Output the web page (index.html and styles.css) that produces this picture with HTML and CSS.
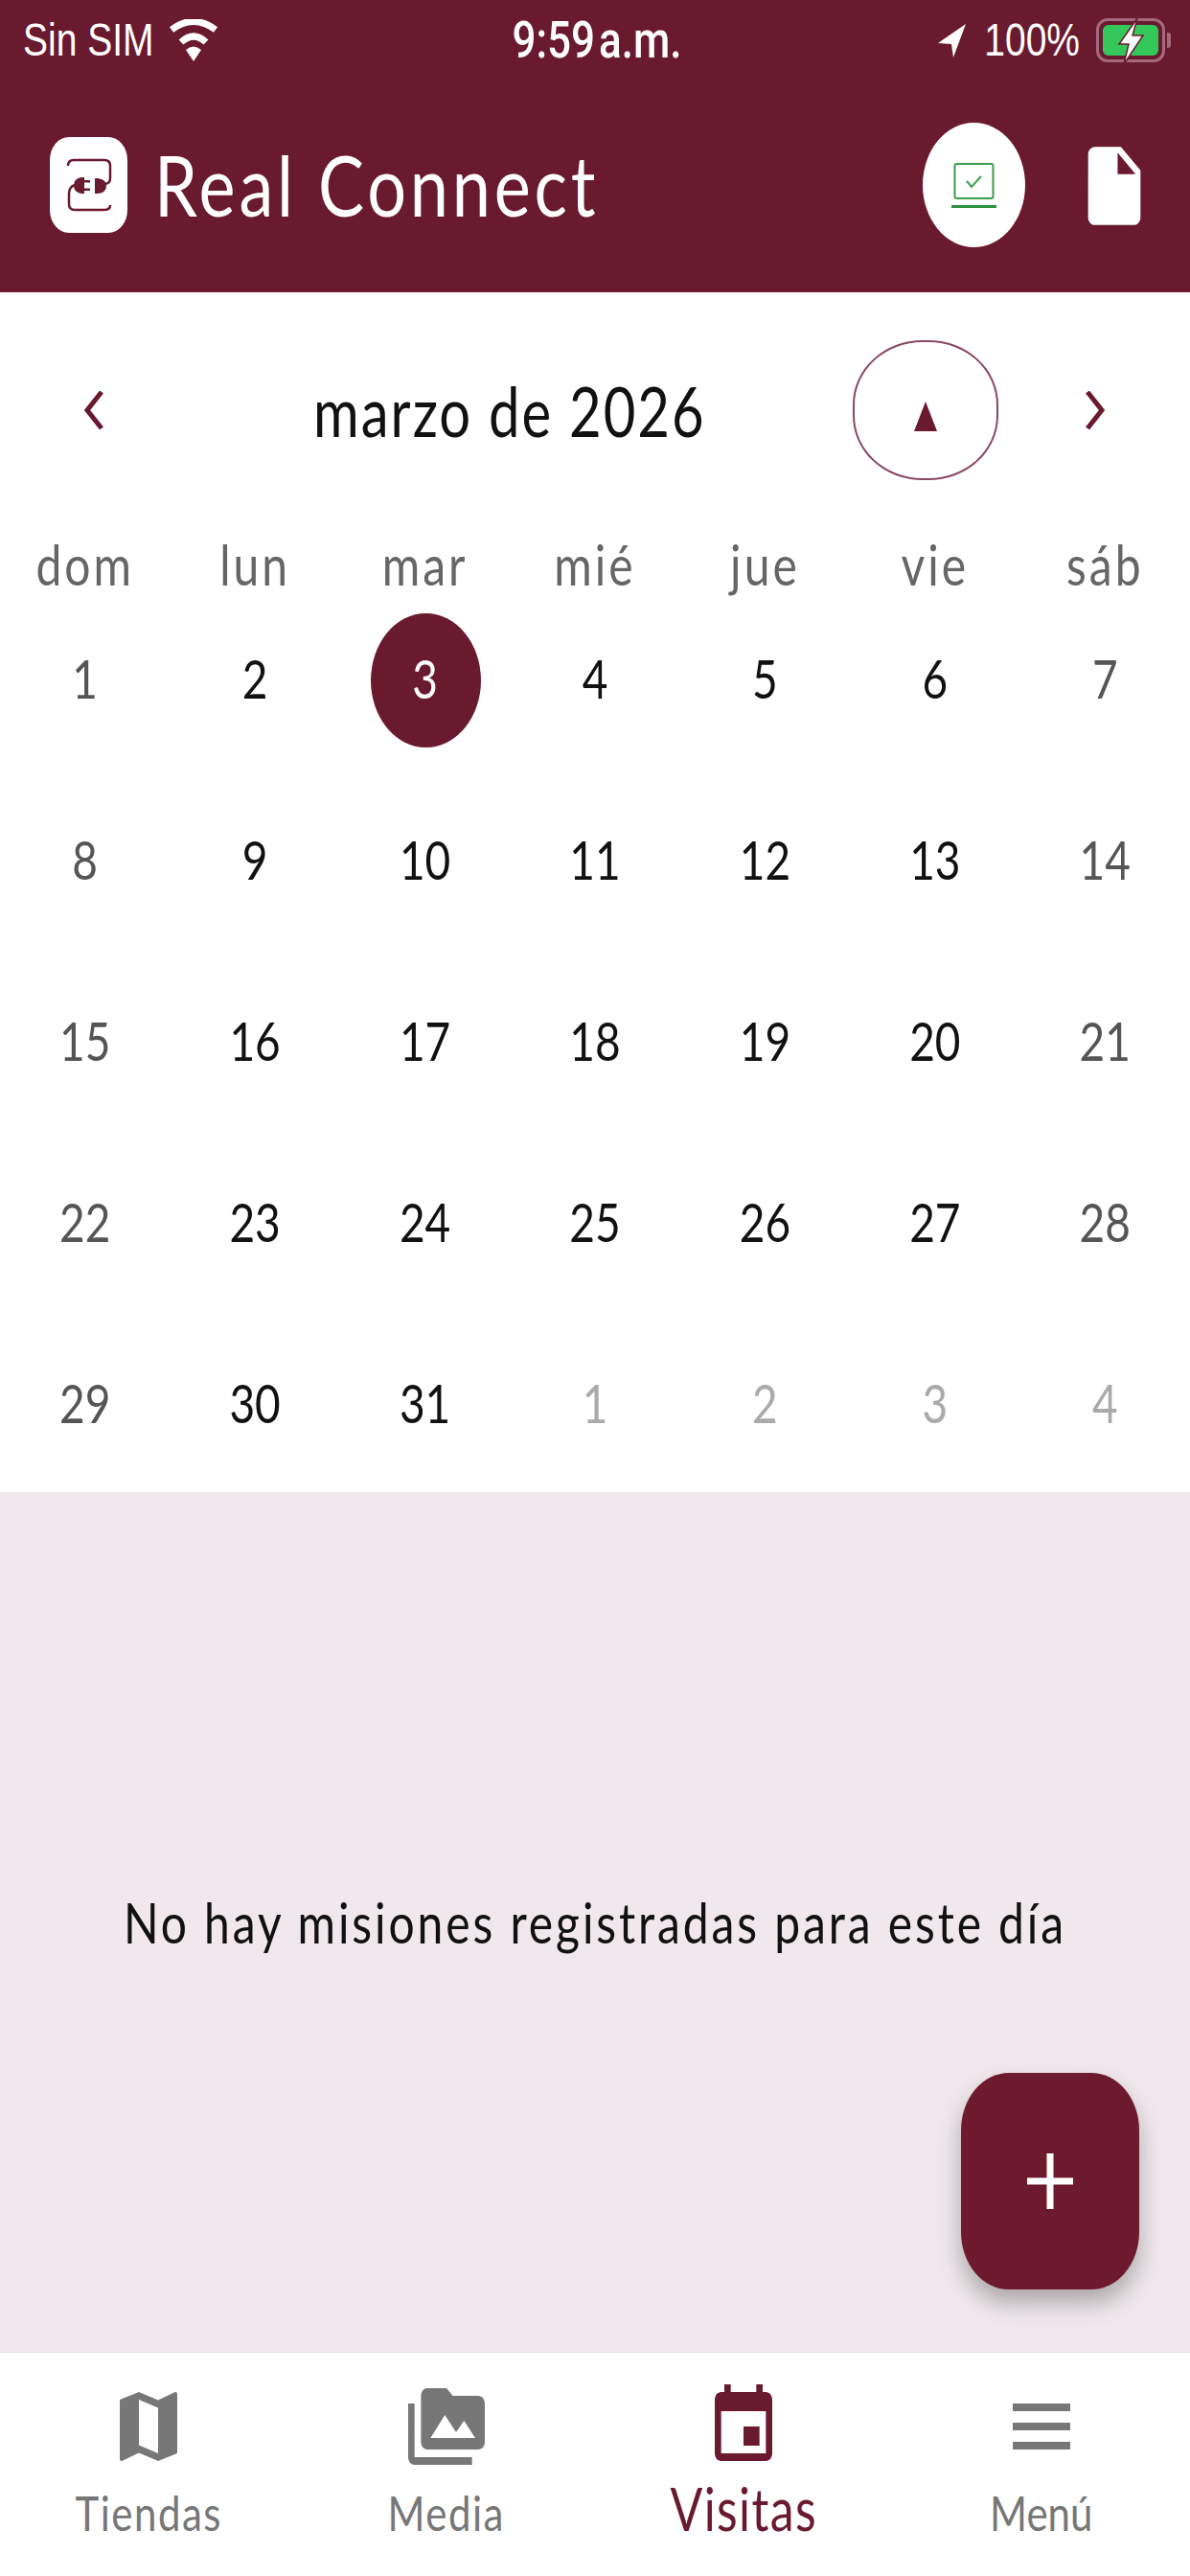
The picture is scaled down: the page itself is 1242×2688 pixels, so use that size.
FILE: index.html
```html
<!DOCTYPE html>
<html lang="es">

<head>
    <meta charset="UTF-8">
    <meta name="viewport" content="width=device-width, initial-scale=1.0">
    <title>Real Connect</title>
    <link rel="stylesheet" href="styles.css">
</head>

<body>
    <div class="status-bar">
        <div class="status-left">
            <span class="tall">Sin SIM</span>
            <svg class="wifi" viewBox="0 0 52 44" preserveAspectRatio="none">
                <path d="M26 44 L18 32 Q26 25 34 32 Z" fill="#fff" />
                <path d="M13 24 Q26 12 39 24" fill="none" stroke="#fff" stroke-width="7" />
                <path d="M3 11 Q26 -6 49 11" fill="none" stroke="#fff" stroke-width="7" />
            </svg>
        </div>
        <div class="status-time"><span class="tall">9:59<span class="thin-gap"></span>a.m.</span></div>
        <div class="status-right">
            <svg class="location" viewBox="0 0 29 35" preserveAspectRatio="none">
                <path d="M29 0 L0 20 L14 21 L16 35 Z" fill="#fff" />
            </svg>
            <span class="tall">100%</span>
            <div class="battery">
                <div class="battery-fill"></div>
                <svg class="bolt" viewBox="0 0 30 48" preserveAspectRatio="none">
                    <path d="M22 0 L3 27 L13 27 L8 48 L28 18 L17 18 Z" fill="#fff" stroke="#6a1a2f" stroke-width="1.5" />
                </svg>
            </div>
            <div class="battery-nub"></div>
        </div>
    </div>

    <header class="app-bar">
        <div class="logo">
            <svg viewBox="0 0 81 100" preserveAspectRatio="none">
                <path d="M19 30 Q19 24 25 24 H57 Q63 24 63 30 V43 Q63 48 58 49" fill="none" stroke="#6a1a2f" stroke-width="2.5" />
                <path d="M26 50 Q20 52 20 59 V70 Q20 76 26 76 H57 Q63 76 63 71" fill="none" stroke="#6a1a2f" stroke-width="2.5" />
                <path d="M36 42 V59 H33 Q25 58 25 50.5 Q25 43 33 42 Z" fill="#6a1a2f" />
                <path d="M36 45 H42 V47.5 H36 Z M36 53.5 H42 V56 H36 Z" fill="#6a1a2f" />
                <path d="M47 43 H50 Q59 44 59 51 Q59 58 50 59 H47 Z" fill="#6a1a2f" />
            </svg>
        </div>
        <h1 class="app-title"><span class="tall">Real Connect</span></h1>
        <div class="sync-btn">
            <svg viewBox="0 0 47 47" preserveAspectRatio="none">
                <rect x="3.5" y="1" width="40" height="36" rx="2" fill="none" stroke="#3a9e4d" stroke-width="2" />
                <path d="M16 19 L21 25 L31 14" fill="none" stroke="#3a9e4d" stroke-width="2" />
                <rect x="0" y="44" width="47" height="3" fill="#2e9142" />
            </svg>
        </div>
        <svg class="doc-icon" viewBox="0 0 24 24" preserveAspectRatio="none">
            <path d="M6 2c-1.1 0-1.99.9-1.99 2L4 20c0 1.1.89 2 1.99 2H18c1.1 0 2-.9 2-2V8l-6-6H6zm7 7V3.5L18.5 9H13z" fill="#fff" />
        </svg>
    </header>

    <section class="calendar">
        <div class="month-row">
            <svg class="chevron" viewBox="0 0 20 40" preserveAspectRatio="none">
                <path d="M18 1 L3 20 L18 39" fill="none" stroke="#6a1a2f" stroke-width="5" />
            </svg>
            <div class="month-name"><span class="tall">marzo de 2026</span></div>
            <div class="month-toggle">
                <svg viewBox="0 0 24 31" preserveAspectRatio="none">
                    <path d="M12 0 L24 31 H0 Z" fill="#6a1a2f" />
                </svg>
            </div>
            <svg class="chevron chevron-next" viewBox="0 0 20 40" preserveAspectRatio="none">
                <path d="M2 1 L17 20 L2 39" fill="none" stroke="#6a1a2f" stroke-width="5" />
            </svg>
        </div>

        <div class="week-head">
            <span class="tall">dom</span>
            <span class="tall">lun</span>
            <span class="tall">mar</span>
            <span class="tall">mié</span>
            <span class="tall">jue</span>
            <span class="tall">vie</span>
            <span class="tall">sáb</span>
        </div>

        <div class="days">
            <div class="day weekend"><span class="tall">1</span></div>
            <div class="day"><span class="tall">2</span></div>
            <div class="day today"><span class="tall">3</span></div>
            <div class="day"><span class="tall">4</span></div>
            <div class="day"><span class="tall">5</span></div>
            <div class="day"><span class="tall">6</span></div>
            <div class="day weekend"><span class="tall">7</span></div>

            <div class="day weekend"><span class="tall">8</span></div>
            <div class="day"><span class="tall">9</span></div>
            <div class="day"><span class="tall">10</span></div>
            <div class="day"><span class="tall">11</span></div>
            <div class="day"><span class="tall">12</span></div>
            <div class="day"><span class="tall">13</span></div>
            <div class="day weekend"><span class="tall">14</span></div>

            <div class="day weekend"><span class="tall">15</span></div>
            <div class="day"><span class="tall">16</span></div>
            <div class="day"><span class="tall">17</span></div>
            <div class="day"><span class="tall">18</span></div>
            <div class="day"><span class="tall">19</span></div>
            <div class="day"><span class="tall">20</span></div>
            <div class="day weekend"><span class="tall">21</span></div>

            <div class="day weekend"><span class="tall">22</span></div>
            <div class="day"><span class="tall">23</span></div>
            <div class="day"><span class="tall">24</span></div>
            <div class="day"><span class="tall">25</span></div>
            <div class="day"><span class="tall">26</span></div>
            <div class="day"><span class="tall">27</span></div>
            <div class="day weekend"><span class="tall">28</span></div>

            <div class="day weekend"><span class="tall">29</span></div>
            <div class="day"><span class="tall">30</span></div>
            <div class="day"><span class="tall">31</span></div>
            <div class="day other"><span class="tall">1</span></div>
            <div class="day other"><span class="tall">2</span></div>
            <div class="day other"><span class="tall">3</span></div>
            <div class="day other"><span class="tall">4</span></div>
        </div>
    </section>

    <main class="missions">
        <p class="empty-text"><span class="tall">No hay misiones registradas para este día</span></p>
        <button class="fab">
            <svg viewBox="0 0 48 58" preserveAspectRatio="none">
                <path d="M20.5 0 H27.5 V25.5 H48 V32.5 H27.5 V58 H20.5 V32.5 H0 V25.5 H20.5 Z" fill="#fff" />
            </svg>
        </button>
    </main>

    <nav class="tab-bar">
        <div class="tab">
            <svg class="tab-icon" viewBox="0 0 24 24" preserveAspectRatio="none">
                <path d="M20.5 3l-.16.03L15 5.1 9 3 3.36 4.9c-.21.07-.36.25-.36.48V20.5c0 .28.22.5.5.5l.16-.03L9 18.9l6 2.1 5.64-1.9c.21-.07.36-.25.36-.48V3.5c0-.28-.22-.5-.5-.5zM15 19l-6-2.11V5l6 2.11V19z" />
            </svg>
            <span class="tab-label tall">Tiendas</span>
        </div>
        <div class="tab">
            <svg class="tab-icon" viewBox="0 0 24 24" preserveAspectRatio="none">
                <path d="M2 6H0v5h.01L0 20c0 1.1.9 2 2 2h18v-2H2V6zm20-2h-8l-2-2H6c-1.1 0-1.99.9-1.99 2L4 16c0 1.1.9 2 2 2h16c1.1 0 2-.9 2-2V6c0-1.1-.9-2-2-2zM7 15l4.5-6 3.5 4.51 2.5-3.01L21 15H7z" />
            </svg>
            <span class="tab-label tall">Media</span>
        </div>
        <div class="tab tab-active">
            <svg class="tab-icon" viewBox="0 0 24 24" preserveAspectRatio="none">
                <path d="M17 12h-5v5h5v-5zM16 1v2H8V1H6v2H5c-1.11 0-1.99.9-1.99 2L3 19c0 1.1.89 2 2 2h14c1.1 0 2-.9 2-2V5c0-1.1-.9-2-2-2h-1V1h-2zm3 18H5V8h14v11z" />
            </svg>
            <span class="tab-label tall">Visitas</span>
        </div>
        <div class="tab">
            <svg class="tab-icon" viewBox="0 0 24 24" preserveAspectRatio="none">
                <path d="M3 18h18v-2H3v2zm0-5h18v-2H3v2zm0-7v2h18V6H3z" />
            </svg>
            <span class="tab-label tab-label-short tall">Menú</span>
        </div>
    </nav>
</body>

</html>
```

FILE: styles.css
```css
body {
    font-family: Lato, "Noto Sans", sans-serif;
    margin: 0;
    width: 1242px;
    height: 2688px;
    display: flex;
    flex-direction: column;
    overflow: hidden;
    background-color: #ffffff;
    color: #111111;
}

/* the screenshot is stretched vertically, so the text is too */
.tall {
    display: inline-block;
    transform: scaleY(1.22);
}

.status-bar {
    height: 84px;
    display: grid;
    grid-template-columns: 1fr auto 1fr;
    align-items: center;
    padding: 0 20px 0 24px;
    background-color: #6a1a2f;
    color: #ffffff;
    font-family: "Liberation Sans", sans-serif;
    font-size: 39px;
}

.status-left {
    display: flex;
    align-items: center;
    gap: 15px;
}

.wifi {
    width: 52px;
    height: 44px;
}

.status-time {
    font-family: Roboto, sans-serif;
    font-weight: 500;
    font-size: 44px;
}

.thin-gap {
    display: inline-block;
    width: 4px;
}

.status-right {
    display: flex;
    align-items: center;
    justify-content: flex-end;
}

.location {
    width: 29px;
    height: 35px;
    margin-right: 19px;
}

.battery {
    position: relative;
    width: 72px;
    height: 46px;
    margin-left: 17px;
    box-sizing: border-box;
    border: 3px solid #a5687c;
    border-radius: 12px;
    padding: 4px;
}

.battery-fill {
    height: 100%;
    border-radius: 6px;
    background-color: #34c759;
}

.bolt {
    position: absolute;
    left: 18px;
    top: -3px;
    width: 30px;
    height: 48px;
}

.battery-nub {
    width: 4px;
    height: 16px;
    margin-left: 2px;
    border-radius: 0 3px 3px 0;
    background-color: #a5687c;
}

.app-bar {
    height: 221px;
    display: flex;
    align-items: flex-start;
    background-color: #6a1a2f;
    color: #ffffff;
}

.logo {
    width: 81px;
    height: 100px;
    margin: 59px 0 0 52px;
    border-radius: 20px / 24px;
    background-color: #ffffff;
}

.logo svg {
    display: block;
    width: 100%;
    height: 100%;
}

.app-title {
    margin: 64px 0 0 28px;
    font-size: 72px;
    font-weight: 400;
    letter-spacing: 3.8px;
    line-height: 88px;
}

.sync-btn {
    width: 107px;
    height: 130px;
    margin: 44px 0 0 auto;
    display: flex;
    align-items: center;
    justify-content: center;
    border-radius: 50%;
    background-color: #ffffff;
}

.sync-btn svg {
    width: 47px;
    height: 47px;
}

.doc-icon {
    width: 82px;
    height: 98px;
    margin: 61px 38px 0 52px;
}

.calendar {
    height: 1252px;
}

.month-row {
    height: 146px;
    margin-top: 50px;
    padding-left: 88px;
    display: flex;
    align-items: center;
}

.chevron {
    width: 20px;
    height: 40px;
}

.chevron-next {
    margin-left: 91px;
}

.month-name {
    width: 408px;
    margin-left: 219px;
    font-size: 58px;
    letter-spacing: 2px;
    text-align: center;
    white-space: nowrap;
}

.month-toggle {
    width: 152px;
    height: 146px;
    margin-left: 155px;
    display: flex;
    align-items: center;
    justify-content: center;
    box-sizing: border-box;
    border: 2px solid #8a4a5c;
    border-radius: 48% / 46%;
}

.month-toggle svg {
    width: 24px;
    height: 31px;
    margin-top: 12px;
}

.week-head {
    height: 53px;
    margin-top: 59px;
    display: grid;
    grid-template-columns: repeat(7, 1fr);
    justify-items: center;
    align-items: center;
    font-size: 48px;
    letter-spacing: 3px;
    color: #666666;
}

.days {
    display: grid;
    grid-template-columns: repeat(7, 1fr);
    grid-auto-rows: 189px;
}

.day {
    display: flex;
    align-items: center;
    justify-content: center;
    font-size: 46px;
    color: #111111;
}

.weekend {
    color: #555555;
}

.other {
    color: #aaaaaa;
}

.today {
    position: relative;
    z-index: 0;
    color: #ffffff;
}

.today::before {
    content: "";
    position: absolute;
    z-index: -1;
    left: 32px;
    top: 27px;
    width: 115px;
    height: 140px;
    border-radius: 50%;
    background-color: #6a1a2f;
}

.missions {
    position: relative;
    flex: 1;
    display: flex;
    align-items: center;
    justify-content: center;
    background-color: #f0e8ec;
}

.empty-text {
    margin: 0;
    font-size: 48px;
    letter-spacing: 2.9px;
    white-space: nowrap;
}

.fab {
    position: absolute;
    right: 53px;
    bottom: 65px;
    width: 186px;
    height: 226px;
    display: flex;
    align-items: center;
    justify-content: center;
    border: none;
    border-radius: 50px / 60px;
    background-color: #6e1a2e;
    box-shadow: 0 14px 24px rgba(0, 0, 0, 0.28);
}

.fab svg {
    width: 48px;
    height: 58px;
}

.tab-bar {
    height: 234px;
    display: grid;
    grid-template-columns: repeat(4, 1fr);
    background-color: #ffffff;
    border-top: 1px solid #e6e2e4;
    box-sizing: border-box;
}

.tab {
    display: flex;
    flex-direction: column;
    align-items: center;
    padding-top: 29px;
    color: #777777;
    fill: #777777;
}

.tab-icon {
    width: 80px;
    height: 96px;
}

.tab-label {
    margin-top: 16px;
    font-size: 42px;
    letter-spacing: 1.5px;
}

.tab-label-short {
    letter-spacing: 0;
}

.tab-active {
    color: #6a1a2f;
    fill: #6a1a2f;
}

.tab-active .tab-label {
    margin-top: 8px;
    font-size: 50px;
    letter-spacing: 1.4px;
}
```
